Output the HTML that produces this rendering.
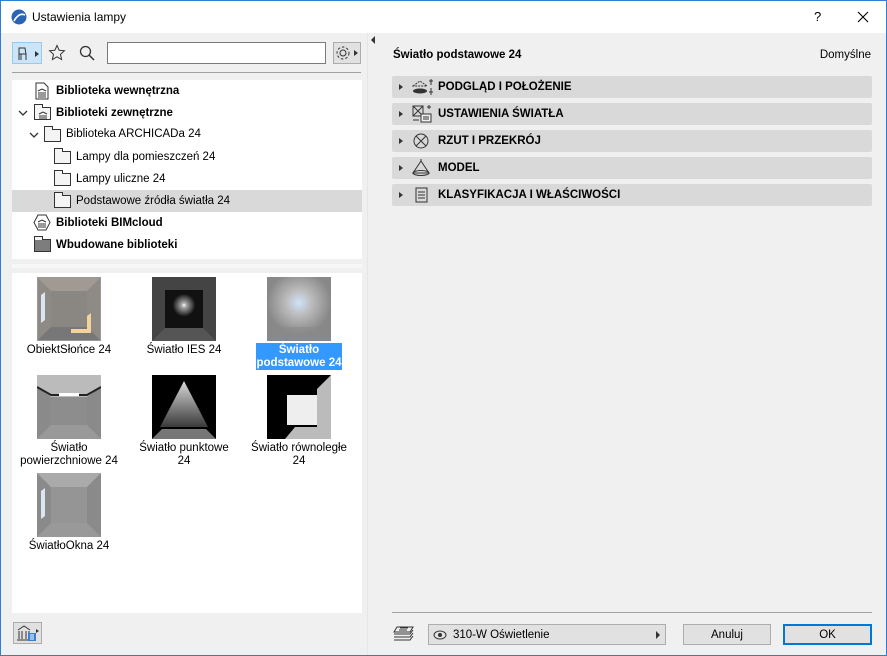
<!DOCTYPE html>
<html><head><meta charset="utf-8"><style>
*{box-sizing:border-box;margin:0;padding:0}
body{width:887px;height:656px;overflow:hidden;font-family:"Liberation Sans",sans-serif;font-size:11.5px;color:#000;background:#f0f0f0;position:relative}
.win{position:absolute;inset:0;border:1px solid #2b7fd6;background:#f0f0f0}
.title{position:absolute;left:0;top:0;width:885px;height:32px;background:#fff}
.abs{position:absolute}
.row{position:absolute;left:11px;width:350px;height:22px;line-height:22px;white-space:nowrap}
.b{font-weight:bold}
.fold{position:absolute;width:17px;height:13px;border:1px solid #333;background:#f4f4f4;top:5px}
.fold:before{content:"";position:absolute;left:-1px;top:-4px;width:7px;height:3px;border:1px solid #333;border-bottom:none;background:#f4f4f4}
.th{position:absolute;width:64px;height:64px}
.lbl{position:absolute;width:116px;text-align:center;line-height:13px;font-size:11.5px}
.sec{position:absolute;left:391px;width:480px;height:22px;background:#d9d9d9;border-radius:2px;line-height:23px;font-weight:bold;font-size:11.5px}
.sec .tri{position:absolute;left:7px;top:8px;border-left:4px solid #333;border-top:3px solid transparent;border-bottom:3px solid transparent}
.sec span{position:absolute;left:46px}
.sec svg{position:absolute;left:20px;top:2px}
.btn{position:absolute;height:21px;background:#e1e1e1;border:1px solid #adadad;text-align:center;line-height:20px;font-size:11.5px}
</style></head><body><div class="win">
<div class="title">
<svg class="abs" style="left:10px;top:8px" width="16" height="16"><circle cx="8" cy="8" r="7.5" fill="#2a64b5"/><path d="M3 12 Q8 3 14 6" stroke="#fff" stroke-width="1.6" fill="none"/></svg>
<div class="abs" style="left:31px;top:9px;font-size:12px">Ustawienia lampy</div>
<div class="abs" style="left:813px;top:8px;font-size:13px">?</div>
<svg class="abs" style="left:856px;top:10px" width="12" height="12"><path d="M1 1L11 11M11 1L1 11" stroke="#000" stroke-width="1.1"/></svg>
</div>
<div class="abs" style="left:11px;top:41px;width:30px;height:22px;background:#cce4f7;border:1px solid #99c9ef"></div>
<svg class="abs" style="left:14px;top:44px" width="26" height="17"><path d="M4 15V3h6l1 6H4M11 9v6M6 9v6" stroke="#333" fill="none"/><path d="M20 6l4 3-4 3z" fill="#333"/></svg>
<svg class="abs" style="left:47px;top:43px" width="18" height="18"><path d="M9 1.5l2.2 4.8 5.2.5-3.9 3.5 1.1 5.2L9 12.8 4.4 15.5l1.1-5.2L1.6 6.8l5.2-.5z" stroke="#333" fill="none"/></svg>
<svg class="abs" style="left:78px;top:44px" width="16" height="16"><circle cx="6.5" cy="6.5" r="5" stroke="#333" fill="none" stroke-width="1.3"/><path d="M10 10l5 5" stroke="#333" stroke-width="1.5"/></svg>
<div class="abs" style="left:106px;top:41px;width:219px;height:22px;background:#fff;border:1px solid #7a7a7a"></div>
<div class="abs" style="left:332px;top:41px;width:28px;height:22px;background:#e1e1e1;border:1px solid #adadad"></div>
<svg class="abs" style="left:334px;top:44px" width="26" height="16"><circle cx="8" cy="8" r="3" stroke="#333" fill="none"/><circle cx="8" cy="8" r="6" stroke="#333" fill="none" stroke-dasharray="2.5 2"/><path d="M19 5l4 3-4 3z" fill="#333"/></svg>
<div class="abs" style="left:11px;top:71px;width:349px;height:1px;background:#a0a0a0"></div>
<div class="abs" style="left:11px;top:79px;width:350px;height:179px;background:#fff"></div>
<div class="abs" style="left:11px;top:189px;width:350px;height:22px;background:#d9d9d9"></div>
<svg class="abs" style="left:34px;top:81px" width="14" height="18"><path d="M1 1h8l4 4v12H1z" stroke="#333" fill="#fff"/><path d="M3 9l4-2 4 2M4 10v4M6 10v4M8 10v4M10 10v4M3 15h8" stroke="#333" fill="none"/></svg>
<div class="row b" style="top:79px;padding-left:44px">Biblioteka wewnętrzna</div>
<svg class="abs" style="left:17px;top:108px" width="10" height="8"><path d="M1 2l4 4 4-4" stroke="#333" fill="none" stroke-width="1.3"/></svg>
<div class="fold" style="left:33px;top:106px;width:17px"></div>
<svg class="abs" style="left:36px;top:107px" width="12" height="12"><path d="M2 6l4-2 4 2M3 7v3M5 7v3M7 7v3M9 7v3M2 11h8" stroke="#333" fill="none"/></svg>
<div class="row b" style="top:101px;padding-left:44px">Biblioteki zewnętrzne</div>
<svg class="abs" style="left:28px;top:130px" width="10" height="8"><path d="M1 2l4 4 4-4" stroke="#333" fill="none" stroke-width="1.3"/></svg>
<div class="fold" style="left:43px;top:128px"></div>
<div class="row" style="top:122px;padding-left:54px">Biblioteka ARCHICADa 24</div>
<div class="fold" style="left:53px;top:150px"></div>
<div class="row" style="top:145px;padding-left:64px">Lampy dla pomieszczeń 24</div>
<div class="fold" style="left:53px;top:172px"></div>
<div class="row" style="top:167px;padding-left:64px">Lampy uliczne 24</div>
<div class="fold" style="left:53px;top:194px"></div>
<div class="row" style="top:189px;padding-left:64px">Podstawowe źródła światła 24</div>
<svg class="abs" style="left:32px;top:213px" width="18" height="17"><path d="M5 1h8l4 7.5-4 7.5H5L1 8.5z" stroke="#333" fill="#fff"/><path d="M5 8l4-2 4 2M6 9v3M8 9v3M10 9v3M12 9v3M5 13h8" stroke="#333" fill="none"/></svg>
<div class="row b" style="top:211px;padding-left:44px">Biblioteki BIMcloud</div>
<div class="fold" style="left:33px;top:238px;background:#7d7d7d"></div>
<div class="row b" style="top:233px;padding-left:44px">Wbudowane biblioteki</div>
<div class="abs" style="left:11px;top:263px;width:350px;height:4px;background:#f7f7f7"></div>
<div class="abs" style="left:11px;top:272px;width:350px;height:340px;background:#fff"></div>
<svg class="th" style="left:36px;top:276px" viewBox="0 0 64 64"><rect width="64" height="64" fill="#8e8a86"/><path d="M0 0h64L50 14H14z" fill="#a09a92"/><path d="M0 64h64L50 50H14z" fill="#777"/><rect x="14" y="14" width="36" height="36" fill="#8a8783"/><path d="M4 18l4-3v28l-4 3z" fill="#dde6f0"/><path d="M34 56h20V36l-4 3v13H34z" fill="#f3d39a"/><rect x=".5" y=".5" width="63" height="63" fill="none" stroke="#999"/></svg>
<div class="lbl" style="left:10px;top:343px">ObiektSłońce 24</div>
<svg class="th" style="left:151px;top:276px" viewBox="0 0 64 64"><defs><radialGradient id="g1" cx=".5" cy=".4" r=".3"><stop offset="0" stop-color="#fff"/><stop offset=".2" stop-color="#aaa"/><stop offset="1" stop-color="#111"/></radialGradient></defs><rect width="64" height="64" fill="#444"/><path d="M0 64h64L50 50H14z" fill="#555"/><rect x="13" y="13" width="38" height="38" fill="url(#g1)"/></svg>
<div class="lbl" style="left:125px;top:343px">Światło IES 24</div>
<svg class="th" style="left:266px;top:276px" viewBox="0 0 64 64"><defs><radialGradient id="g2" cx=".5" cy=".4" r=".5"><stop offset="0" stop-color="#cfe3fa"/><stop offset=".4" stop-color="#bbb"/><stop offset="1" stop-color="#888"/></radialGradient></defs><rect width="64" height="64" fill="url(#g2)"/><path d="M0 64h64L50 50H14z" fill="#8a8a8a" opacity=".6"/></svg>
<div class="abs" style="left:255px;top:342px;width:86px;height:27px;background:#3399ff;color:#fff;text-align:center;line-height:13px;font-weight:bold;padding-top:1px">Światło<br>podstawowe 24</div>
<svg class="th" style="left:36px;top:374px" viewBox="0 0 64 64"><rect width="64" height="64" fill="#8a8a8a"/><path d="M0 0h64v12l-14 10H14L0 12z" fill="#bbb"/><path d="M0 64h64L50 50H14z" fill="#999"/><rect x="14" y="22" width="36" height="28" fill="#8d8d8d"/><path d="M0 12L14 20h36l14-8" stroke="#222" stroke-width="2" fill="none"/><rect x="22" y="18" width="20" height="3" fill="#fff"/></svg>
<div class="lbl" style="left:10px;top:441px">Światło<br>powierzchniowe 24</div>
<svg class="th" style="left:151px;top:374px" viewBox="0 0 64 64"><defs><linearGradient id="g3" x1="0" y1="0" x2="0" y2="1"><stop offset="0" stop-color="#fff"/><stop offset="1" stop-color="#444"/></linearGradient></defs><rect width="64" height="64" fill="#000"/><path d="M32 6L8 52h48z" fill="url(#g3)" opacity=".85"/><path d="M0 64h64L54 54H10z" fill="#777"/></svg>
<div class="lbl" style="left:125px;top:441px">Światło punktowe<br>24</div>
<svg class="th" style="left:266px;top:374px" viewBox="0 0 64 64"><rect width="64" height="64" fill="#000"/><path d="M64 0v64H18l10-12h22V14z" fill="#bbb"/><rect x="20" y="20" width="30" height="30" fill="#eee"/></svg>
<div class="lbl" style="left:240px;top:441px">Światło równoległe<br>24</div>
<svg class="th" style="left:36px;top:472px" viewBox="0 0 64 64"><rect width="64" height="64" fill="#8a8a8a"/><path d="M0 0h64L50 14H14z" fill="#aaa"/><path d="M0 64h64L50 50H14z" fill="#999"/><rect x="14" y="14" width="36" height="36" fill="#959595"/><path d="M4 18l4-3v28l-4 3z" fill="#dde6f0"/></svg>
<div class="lbl" style="left:10px;top:539px">ŚwiatłoOkna 24</div>
<div class="abs" style="left:12px;top:621px;width:29px;height:22px;background:#e1e1e1;border:1px solid #adadad"></div>
<svg class="abs" style="left:15px;top:623px" width="24" height="18"><path d="M2 6l6-4 6 4M3 7v8M6 7v8M10 7v8M13 7v8M1 16h14" stroke="#333" fill="none"/><rect x="12" y="9" width="8" height="8" fill="#3a7fd5"/><path d="M14 11h4M14 13h4M14 15h4" stroke="#fff"/><path d="M20 5l3 2-3 2z" fill="#333"/></svg>
<div class="abs" style="left:366px;top:32px;width:1px;height:622px;background:#e6e6e6"></div>
<div class="abs" style="left:370px;top:35px;border-right:4px solid #333;border-top:4px solid transparent;border-bottom:4px solid transparent"></div>
<div class="abs b" style="left:392px;top:48px">Światło podstawowe 24</div>
<div class="abs" style="right:15px;top:48px">Domyślne</div>
<div class="sec" style="top:75px"><i class="tri"></i><svg width="22" height="18"><path d="M1 8l7-5 7 5z" stroke="#333" fill="none" stroke-dasharray="2 1"/><ellipse cx="8" cy="13" rx="7" ry="2.5" fill="#333"/><path d="M19 1v6M19 10v7M17 3h4M17 14h4" stroke="#333"/></svg><span>PODGLĄD I POŁOŻENIE</span></div>
<div class="sec" style="top:102px"><i class="tri"></i><svg width="22" height="18"><rect x="1" y="1" width="10" height="10" stroke="#333" fill="none"/><path d="M1 1l10 10M11 1L1 11" stroke="#333"/><rect x="9" y="9" width="10" height="8" stroke="#333" fill="#f0f0f0"/><path d="M11 12h6M11 14h6M15 2h4M17 0v4M1 15h6" stroke="#333"/></svg><span>USTAWIENIA ŚWIATŁA</span></div>
<div class="sec" style="top:129px"><i class="tri"></i><svg width="22" height="18"><circle cx="9" cy="9" r="7" stroke="#333" fill="none"/><path d="M4 4l10 10M14 4L4 14" stroke="#333"/></svg><span>RZUT I PRZEKRÓJ</span></div>
<div class="sec" style="top:156px"><i class="tri"></i><svg width="22" height="18"><path d="M9 2L1 14h16z" stroke="#333" fill="none"/><ellipse cx="9" cy="14" rx="8" ry="2.5" stroke="#333" fill="none"/><path d="M9 0v2" stroke="#333"/></svg><span>MODEL</span></div>
<div class="sec" style="top:183px"><i class="tri"></i><svg width="22" height="18"><rect x="4" y="2" width="11" height="14" stroke="#333" fill="none"/><path d="M6 6h7M6 9h7M6 12h7" stroke="#333"/></svg><span>KLASYFIKACJA I WŁAŚCIWOŚCI</span></div>
<div class="abs" style="left:391px;top:611px;width:480px;height:1px;background:#a0a0a0"></div>
<svg class="abs" style="left:392px;top:624px" width="22" height="18"><path d="M4 2h16l-3 5H1zM1 9h16l3-4M1 12h16l3-4M1 15h16l3-4" stroke="#333" fill="none"/><path d="M7 3h8M6 5h8" stroke="#333"/></svg>
<div class="btn" style="left:427px;top:623px;width:238px;text-align:left;padding-left:24px">310-W Oświetlenie</div>
<svg class="abs" style="left:432px;top:629px" width="14" height="10"><ellipse cx="7" cy="5" rx="6" ry="4" stroke="#333" fill="none"/><circle cx="7" cy="5" r="2" fill="#333"/></svg>
<div class="abs" style="left:655px;top:630px;border-left:4px solid #333;border-top:4px solid transparent;border-bottom:4px solid transparent"></div>
<div class="btn" style="left:682px;top:623px;width:88px">Anuluj</div>
<div class="btn" style="left:782px;top:623px;width:89px;border:2px solid #0078d7;line-height:18px">OK</div>
</div></body></html>
